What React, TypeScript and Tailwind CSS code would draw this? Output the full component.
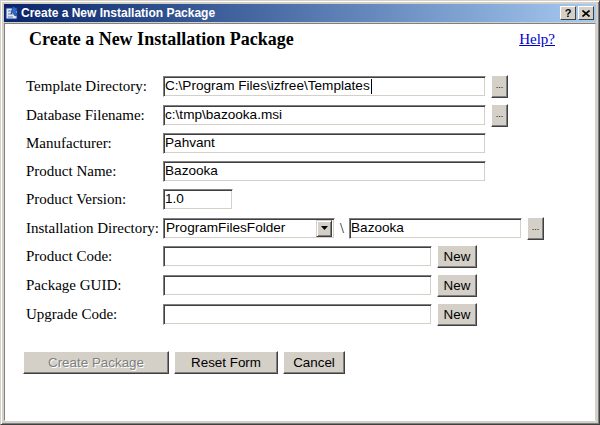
import React from "react";

const serif = { fontFamily: '"Liberation Serif", "Times New Roman", serif' };
const sans = { fontFamily: '"Liberation Sans", Arial, sans-serif' };

function Field({ width, value, caret }: { width: string; value?: string; caret?: boolean }) {
  return (
    <div
      className={`${width} h-[21px] bg-white border border-t-[#808080] border-l-[#808080] border-b-white border-r-white shadow-[inset_1px_1px_0_#404040,inset_-1px_-1px_0_#d4d0c8] flex items-center pl-[1px] text-[13.6px] text-black whitespace-nowrap overflow-hidden`}
      style={sans}
    >
      {value}
      {caret && <span className="inline-block w-px h-[15px] bg-black ml-px" />}
    </div>
  );
}

function Btn({
  children,
  width,
  height = "h-[23px]",
  disabled,
}: {
  children: React.ReactNode;
  width: string;
  height?: string;
  disabled?: boolean;
}) {
  return (
    <div
      className={`${width} ${height} bg-[#d4d0c8] border border-t-white border-l-white border-b-[#404040] border-r-[#404040] shadow-[inset_-1px_-1px_0_#808080] flex items-center justify-center text-[13.4px] leading-none ${
        disabled ? "text-[#808080] [text-shadow:1px_1px_0_#fff]" : "text-black"
      }`}
      style={sans}
    >
      {children}
    </div>
  );
}

function Browse({ height = "h-[23px]" }: { height?: string }) {
  return (
    <Btn width="w-[17px]" height={height}>
      <span className="text-[9px] -mt-[2px]">...</span>
    </Btn>
  );
}

const rows = [
  { label: "Template Directory:", h: "h-[29px]" },
  { label: "Database Filename:", h: "h-[28px]" },
  { label: "Manufacturer:", h: "h-[28px]" },
  { label: "Product Name:", h: "h-[28px]" },
  { label: "Product Version:", h: "h-[29px]" },
  { label: "Installation Directory:", h: "h-[28px]" },
  { label: "Product Code:", h: "h-[29px]" },
  { label: "Package GUID:", h: "h-[29px]" },
  { label: "Upgrade Code:", h: "h-[29px]" },
];

function RowContent({ i }: { i: number }) {
  if (i === 0)
    return (
      <div className="flex items-center gap-[5px]">
        <Field width="w-[323px]" value="C:\Program Files\izfree\Templates" caret />
        <Browse />
      </div>
    );
  if (i === 1)
    return (
      <div className="flex items-center gap-[5px]">
        <Field width="w-[323px]" value="c:\tmp\bazooka.msi" />
        <Browse />
      </div>
    );
  if (i === 2) return <Field width="w-[323px]" value="Pahvant" />;
  if (i === 3) return <Field width="w-[323px]" value="Bazooka" />;
  if (i === 4) return <Field width="w-[70px]" value="1.0" />;
  if (i === 5)
    return (
      <div className="flex items-center">
        <div className="w-[172px] h-[21px] bg-white border border-t-[#808080] border-l-[#808080] border-b-white border-r-white shadow-[inset_1px_1px_0_#404040,inset_-1px_-1px_0_#d4d0c8] flex items-center p-[2px]">
          <span className="flex-1 text-[13.6px] text-black" style={sans}>
            ProgramFilesFolder
          </span>
          <div className="w-[16px] h-[17px] bg-[#d4d0c8] border border-t-[#d4d0c8] border-l-[#d4d0c8] border-b-[#404040] border-r-[#404040] shadow-[inset_1px_1px_0_#fff,inset_-1px_-1px_0_#808080] flex items-center justify-center">
            <svg width="7" height="4" viewBox="0 0 7 4">
              <path d="M0 0h7L3.5 4z" fill="#000" />
            </svg>
          </div>
        </div>
        <span className="w-[14px] text-center text-[14px] text-black" style={serif}>
          \
        </span>
        <Field width="w-[173px]" value="Bazooka" />
        <div className="ml-[5px]">
          <Browse />
        </div>
      </div>
    );
  return (
    <div className="flex items-center gap-[5px]">
      <Field width="w-[269px]" value="" />
      <Btn width="w-[40px]">New</Btn>
    </div>
  );
}

export default function App() {
  return (
    <div className="w-[600px] h-[425px] bg-[#d4d0c8] border border-t-[#d4d0c8] border-l-[#d4d0c8] border-b-[#404040] border-r-[#404040] shadow-[inset_1px_1px_0_#fff,inset_-1px_-1px_0_#808080] p-[3px] flex flex-col overflow-hidden">
      {/* Title bar */}
      <div className="h-[18px] shrink-0 bg-gradient-to-r from-[#0a246a] to-[#a6caf0] flex items-center pl-[0px] pr-[2px]">
        <svg width="16" height="16" viewBox="0 0 16 16" className="shrink-0">
          <rect x="2" y="3" width="11" height="11" fill="#dfe8f5" stroke="#1c3c8c" />
          <path d="M4 6h7M4 9h7M4 12h5" stroke="#5a7cc4" />
          <path d="M9 1l5 4-3 1 2 4-2 1-2-4-2 2z" fill="#2b6fd6" stroke="#0a246a" strokeWidth="0.6" />
        </svg>
        <span className="ml-[1px] text-[12px] font-bold text-white whitespace-nowrap" style={sans}>
          Create a New Installation Package
        </span>
        <div className="ml-auto flex gap-[2px]">
          <div className="w-[16px] h-[14px] bg-[#d4d0c8] border border-t-white border-l-white border-b-[#404040] border-r-[#404040] flex items-center justify-center text-[11px] font-bold text-black leading-none" style={sans}>
            ?
          </div>
          <div className="w-[16px] h-[14px] bg-[#d4d0c8] border border-t-white border-l-white border-b-[#404040] border-r-[#404040] flex items-center justify-center">
            <svg width="8" height="7" viewBox="0 0 8 7">
              <path d="M0.5 0.5l7 6M7.5 0.5l-7 6" stroke="#000" strokeWidth="1.6" />
            </svg>
          </div>
        </div>
      </div>

      {/* Content */}
      <div className="flex-1 mt-[1px] bg-white border border-t-[#808080] border-l-[#808080] border-b-white border-r-[#d4d0c8] pl-[21px] pr-[40px] pt-[3px]">
        <div className="flex items-center justify-between h-[24px] pl-[3px]">
          <h1 className="text-[18px] font-bold text-black" style={serif}>
            Create a New Installation Package
          </h1>
          <a href="#help" className="text-[15px] text-[#0000cc] underline" style={serif}>
            Help?
          </a>
        </div>

        <div className="mt-[21px] flex flex-col">
          {rows.map((r, i) => (
            <div key={r.label} className={`${r.h} flex items-center`}>
              <div className="w-[137px] shrink-0 text-[15px] text-black whitespace-nowrap" style={serif}>
                {r.label}
              </div>
              <RowContent i={i} />
            </div>
          ))}
        </div>

        <div className="mt-[22px] -ml-[3px] flex gap-[5px]">
          <Btn width="w-[146px]" disabled>
            Create Package
          </Btn>
          <Btn width="w-[104px]">Reset Form</Btn>
          <Btn width="w-[62px]">Cancel</Btn>
        </div>
      </div>
    </div>
  );
}
